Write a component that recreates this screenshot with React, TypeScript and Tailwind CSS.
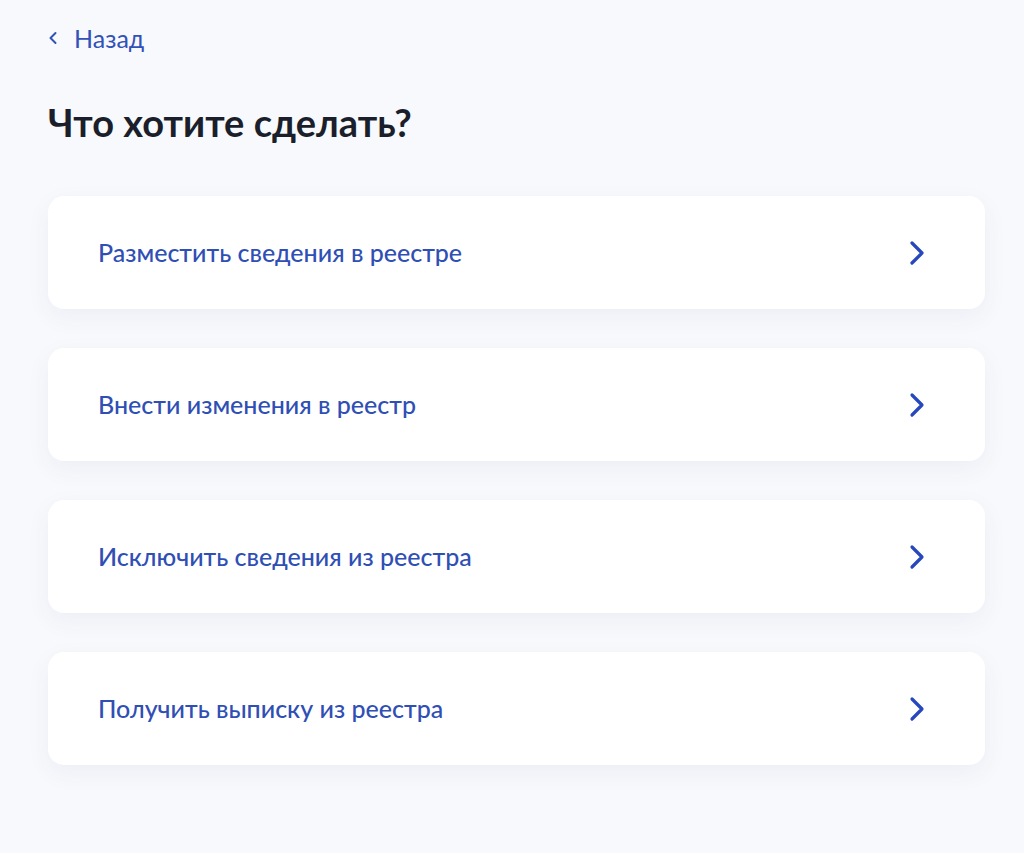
const actions = [
  'Разместить сведения в реестре',
  'Внести изменения в реестр',
  'Исключить сведения из реестра',
  'Получить выписку из реестра',
]

function Chevron() {
  return (
    <svg width="16" height="26" viewBox="0 0 16 26" fill="none">
      <path
        d="M3 3l10 10-10 10"
        stroke="#2747bd"
        strokeWidth="3.2"
        strokeLinecap="round"
        strokeLinejoin="round"
      />
    </svg>
  )
}

function BackChevron() {
  return (
    <svg width="10" height="14" viewBox="0 0 10 14" fill="none">
      <path
        d="M7.5 2L2.5 7l5 5"
        stroke="#3152b8"
        strokeWidth="2"
        strokeLinecap="round"
        strokeLinejoin="round"
      />
    </svg>
  )
}

export default function App() {
  return (
    <div
      className="min-h-[853px] w-full bg-[#f8f9fc] px-[48px] pt-[24px]"
      style={{ fontFamily: 'Lato, "Noto Sans", sans-serif' }}
    >
      {/* Back link */}
      <button className="flex items-center gap-[16px] text-[#3152b8] text-[25px] leading-[28px]">
        <BackChevron />
        <span>Назад</span>
      </button>

      <h1 className="mt-[47px] text-[38px] font-bold leading-[46px] text-[#1a1f2b]">
        Что хотите сделать?
      </h1>

      {/* Action list */}
      <div className="mt-[51px] flex w-[937px] flex-col gap-[39px]">
        {actions.map((label) => (
          <button
            key={label}
            className="flex h-[113px] items-center justify-between rounded-[16px] bg-white pl-[50px] pr-[60px] text-left shadow-[0_8px_24px_rgba(40,60,140,0.06)]"
          >
            <span className="text-[25px] font-medium text-[#2f4fb5]">{label}</span>
            <Chevron />
          </button>
        ))}
      </div>
    </div>
  )
}
